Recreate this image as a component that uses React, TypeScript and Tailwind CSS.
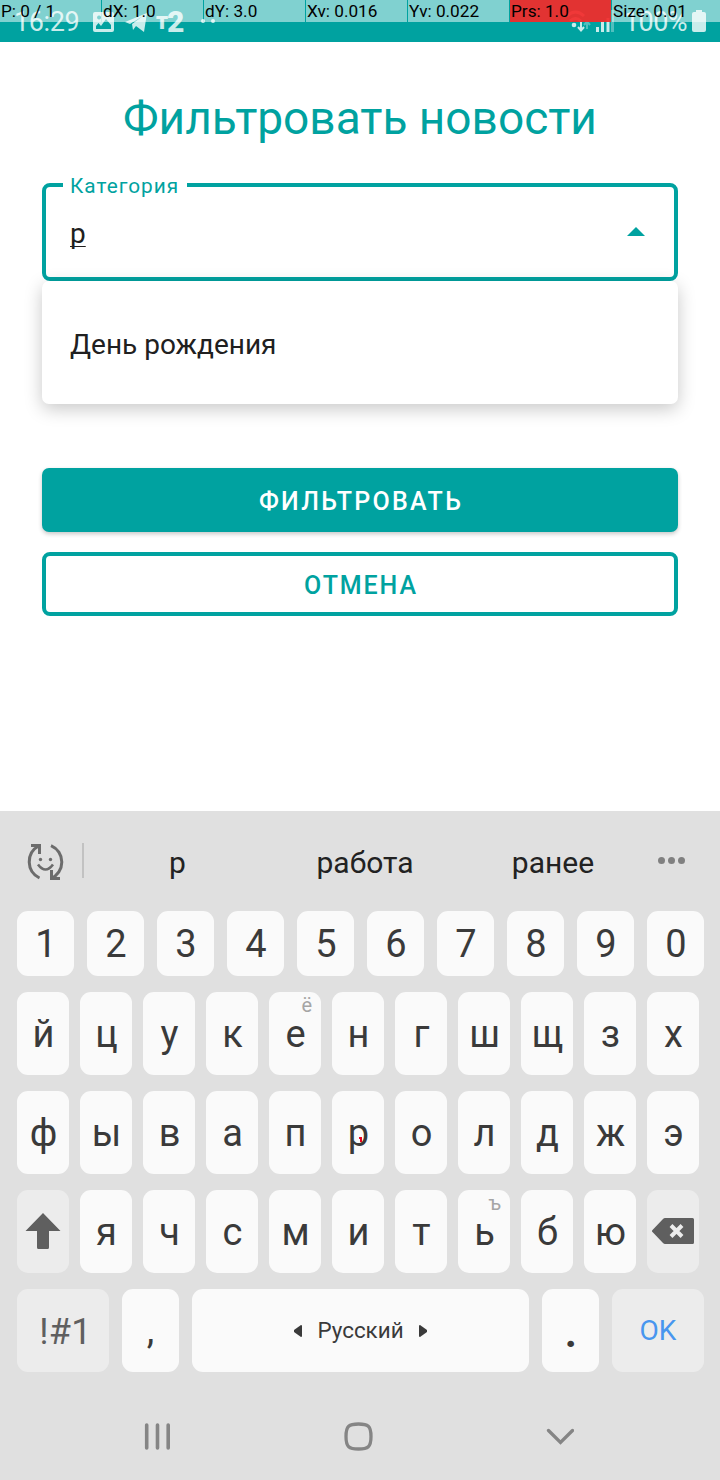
import React from "react";

const debugCells = [
  { text: "P: 0 / 1", cls: "bg-white/50" },
  { text: "dX: 1.0", cls: "bg-white/50" },
  { text: "dY: 3.0", cls: "bg-white/50" },
  { text: "Xv: 0.016", cls: "bg-white/50" },
  { text: "Yv: 0.022", cls: "bg-white/50" },
  { text: "Prs: 1.0", cls: "bg-[#f32a2a]/93" },
  { text: "Size: 0.01", cls: "bg-white/50" },
];

function StatusBar() {
  return (
    <header className="relative h-[42px] overflow-hidden bg-[#00a2a0] text-[#c9eceb]">
      <div className="flex h-full items-start pl-[14px] pt-[7px]">
        <span className="w-[78px] shrink-0 whitespace-nowrap text-[27px] leading-[31px] tracking-[-0.400px]">16:29</span>
        <svg className="mt-[5px] ml-px shrink-0" width="21" height="20" viewBox="0 0 21 20" fill="currentColor">
          <path fillRule="evenodd" d="M2 0h17a2 2 0 0 1 2 2v16a2 2 0 0 1-2 2H2a2 2 0 0 1-2-2V2a2 2 0 0 1 2-2Zm4 3.500a2 2 0 1 0 .1 0ZM3 17h15v-4l-5-6-5 7-2.500-3L3 14Z" />
        </svg>
        <svg className="mt-[6px] ml-[11px] shrink-0" width="22" height="19" viewBox="0 0 22 19" fill="currentColor">
          <path d="M0 9 22 0l-3 19-8-6-3 4-1-6L18 3 5 11Z" />
        </svg>
        <span className="ml-[9px] mt-[3px] w-[11px] text-[23px] leading-[24px] font-black">т</span>
        <span className="mt-px w-[17px] text-[30px] leading-[27px] font-black">2</span>
        <span className="ml-[17px] mt-[12px] flex gap-[6px]">
          <i className="size-1 rounded-full bg-current" />
          <i className="size-1 rounded-full bg-current" />
        </span>
        <svg className="ml-auto mt-[1px] shrink-0" width="46" height="26" viewBox="0 0 46 26" fill="none" stroke="currentColor">
          <path d="M3 8q8.500-8 17 0M6 13q5.500-5 11 0" strokeWidth="3" />
          <circle cx="10" cy="17" r="2.300" fill="currentColor" stroke="none" />
          <path d="M17 14v8m-3-3 3 3.500 3-3.500" strokeWidth="2" />
          <path d="M23 21v-7m-3 3 3-3.500 3 3.500" strokeWidth="2" opacity=".4" />
          <path d="M33.500 19v5M38.500 13.500V24M44 10v14" strokeWidth="3" />
        </svg>
        <i className="mt-[3px] ml-px h-[22px] w-[3px] shrink-0 bg-current opacity-40" />
        <span className="ml-[10px] w-[63px] shrink-0 whitespace-nowrap text-[27px] leading-[31px] tracking-[-0.600px]">100%</span>
        <svg className="ml-[5px] mr-[14px] mt-[3px] shrink-0" width="14" height="22" viewBox="0 0 14 22" fill="currentColor">
          <path d="M4 0h6v2h2a2 2 0 0 1 2 2v16a2 2 0 0 1-2 2H2a2 2 0 0 1-2-2V4a2 2 0 0 1 2-2h2Z" />
        </svg>
      </div>
      <div className="absolute inset-x-0 top-0 flex h-[22px] gap-px text-black">
        {debugCells.map((c) => (
          <span key={c.text} className={`w-[101px] shrink-0 whitespace-nowrap pl-px text-[17.200px] leading-[22px] last:w-[110px] ${c.cls}`}>
            {c.text}
          </span>
        ))}
      </div>
    </header>
  );
}

function Form() {
  return (
    <main className="flex h-[769px] flex-col px-[42px] text-[#00a2a0]">
      <h1 className="mt-[48px] text-center text-[46px] leading-[56px] whitespace-nowrap">Фильтровать новости</h1>
      <fieldset className="mt-[25px] h-[110px] rounded-[8px] border-4 border-[#00a2a0] pl-[17px] pr-[29px]">
        <legend className="h-[28px] w-[124px] pl-[7px] text-[20.800px] leading-[30px] tracking-[1px] whitespace-nowrap">Категория</legend>
        <div className="mt-[15px] flex items-center justify-between pl-[7px]">
          <span className="text-[28px] leading-[40px] text-[#202020] underline decoration-1 underline-offset-[3px] [text-decoration-skip-ink:none]">р</span>
          <svg className="-mt-[6px]" width="18" height="9" viewBox="0 0 18 9" fill="currentColor">
            <path d="M0 9 9 0l9 9Z" />
          </svg>
        </div>
      </fieldset>
      <div className="flex h-[123px] shrink-0 items-center rounded-[7px] bg-white pl-[28px] pt-[4px] text-[28px] text-[#202020] shadow-[0_5px_18px_rgba(0,0,0,0.22)]">
        День рождения
      </div>
      <button className="mt-[64px] h-[64px] shrink-0 rounded-[7px] bg-[#00a2a0] pl-[2px] pt-[4px] text-[25px] font-medium tracking-[2.300px] text-white shadow-[0_2px_4px_rgba(0,0,0,0.22)]">
        ФИЛЬТРОВАТЬ
      </button>
      <button className="mt-[20px] h-[64px] shrink-0 rounded-[8px] border-4 border-[#00a2a0] pl-[2px] pt-[4px] text-[25px] font-medium tracking-[1.900px]">
        ОТМЕНА
      </button>
    </main>
  );
}

function Letter({ ch }: { ch: string }) {
  const hint = ch === "е" ? "ё" : ch === "ь" ? "ъ" : null;
  return (
    <div className="relative flex w-[52px] items-center justify-center rounded-[11px] bg-[#fafafa] pl-px pt-[2px] text-[38px] text-[#3a3a3a]">
      {ch}
      {hint && <span className="absolute right-[9px] top-[2px] text-[20px] leading-[22px] text-[#a5a5a5]">{hint}</span>}
      {ch === "р" && (
        <svg className="absolute left-[27px] top-[46px]" width="4" height="6" viewBox="0 0 4 6">
          <path d="M0 0h3v5H1V2H0Z" fill="#e80020" />
        </svg>
      )}
    </div>
  );
}

function Keyboard() {
  return (
    <section className="flex h-[669px] flex-col bg-[#e0e0e0] pl-[17px] text-[#3a3a3a]">
      <div className="flex h-[100px] items-center text-[30px] text-[#222222]">
        <svg className="-mt-px ml-[9px]" width="39" height="40" viewBox="0 0 39 40" fill="none" stroke="#6c6c6c" strokeWidth="3">
          <path d="M13.500 37A18 18 0 0 1 12.500 5M5 4.500h8.500V13M25 4.500a18 18 0 0 1 0 33M34 37.500h-8.500V29" />
          <path d="M12 23.500q7.500 10 15 0" strokeWidth="2.600" />
          <circle cx="14.500" cy="18.500" r="1.700" fill="#6c6c6c" stroke="none" />
          <circle cx="24.500" cy="18.500" r="1.700" fill="#6c6c6c" stroke="none" />
        </svg>
        <i className="-mt-px ml-[17px] h-[35px] w-[2px] bg-[#c2c2c2]" />
        <div className="flex w-[563px] pt-[2px]">
          <span className="w-[187px] text-center">р</span>
          <span className="w-[188px] text-center">работа</span>
          <span className="w-[188px] text-center">ранее</span>
        </div>
        <span className="-mt-[2px] ml-[11px] flex gap-[3px]">
          <i className="size-[7px] rounded-full bg-[#808080]" />
          <i className="size-[7px] rounded-full bg-[#808080]" />
          <i className="size-[7px] rounded-full bg-[#808080]" />
        </span>
      </div>
      <div className="flex h-[65px] gap-[13px]">
        {"1234567890".split("").map((n) => (
          <div key={n} className="flex w-[57px] items-center justify-center rounded-[11px] bg-[#fafafa] pl-px pt-[2px] text-[38px]">{n}</div>
        ))}
      </div>
      <div className="mt-[16px] flex h-[83px] gap-[11px]">
        {"йцукенгшщзх".split("").map((c) => <Letter key={c} ch={c} />)}
      </div>
      <div className="mt-[16px] flex h-[83px] gap-[11px]">
        {"фывапролджэ".split("").map((c) => <Letter key={c} ch={c} />)}
      </div>
      <div className="mt-[16px] flex h-[83px] gap-[11px]">
        <div className="flex w-[52px] items-center justify-center rounded-[11px] bg-[#ececec] pb-px">
          <svg width="36" height="36" viewBox="0 0 36 36" fill="#5f5f5f">
            <path d="M18 0 35.500 18H24v16.500a1.500 1.500 0 0 1-1.500 1.500h-9a1.500 1.500 0 0 1-1.500-1.500V18H.5Z" />
          </svg>
        </div>
        {"ячсмитьбю".split("").map((c) => <Letter key={c} ch={c} />)}
        <div className="flex w-[52px] items-center justify-center rounded-[11px] bg-[#ececec] pb-[2px]">
          <svg width="42" height="26" viewBox="0 0 42 26">
            <path d="M13 0h27.500A1.500 1.500 0 0 1 42 1.500v23a1.500 1.500 0 0 1-1.500 1.500H13q-1 0-2-1L.5 14a1.400 1.400 0 0 1 0-2L11 1q1-1 2-1Z" fill="#5f5f5f" />
            <path d="m19 7.500 11 11m0-11-11 11" stroke="#ececec" strokeWidth="4" />
          </svg>
        </div>
      </div>
      <div className="mt-[16px] flex h-[83px] gap-[13px]">
        <div className="flex w-[92px] items-center justify-center rounded-[11px] bg-[#ececec] pl-[5px] pt-[2px] text-[36px] tracking-[0.300px] text-[#5f5f5f]">!#1</div>
        <div className="flex w-[57px] items-center justify-center rounded-[11px] bg-[#fafafa] text-[38px]">,</div>
        <div className="flex w-[337px] items-center justify-center gap-[15px] rounded-[11px] bg-[#fafafa] text-[22.400px]">
          <svg width="8" height="12" viewBox="0 0 8 12" fill="currentColor"><path d="M8 1v10q0 1-1 1L0 7V5l7-5q1 0 1 1Z" /></svg>
          <span className="pt-px">Русский</span>
          <svg width="8" height="12" viewBox="0 0 8 12" fill="currentColor"><path d="M0 1v10q0 1 1 1l7-5V5L1 0Q0 0 0 1Z" /></svg>
        </div>
        <div className="flex w-[57px] items-center justify-center rounded-[11px] bg-[#fafafa] pl-px text-[48px] font-medium">.</div>
        <div className="flex w-[92px] items-center justify-center rounded-[11px] bg-[#ececec] pt-px text-[28px] text-[#4896ef]">OK</div>
      </div>
      <nav className="mt-[50px] flex h-[29px] items-center text-[#858585]">
        <svg className="ml-[127px]" width="27" height="27" viewBox="0 0 27 27" stroke="currentColor" strokeWidth="3.600" strokeLinecap="round">
          <path d="M2.700 2v23M13.500 2v23M24.200 2v23" />
        </svg>
        <svg className="ml-[173px]" width="29" height="29" viewBox="0 0 29 29" fill="none" stroke="currentColor" strokeWidth="3.300">
          <path d="M14.500 2C24 2 27 4 27 14.500S24 27 14.500 27 2 25 2 14.500 5 2 14.500 2Z" />
        </svg>
        <svg className="ml-[173px]" width="28" height="17" viewBox="0 0 28 17" fill="none" stroke="currentColor" strokeWidth="3.300" strokeLinecap="round">
          <path d="m2.500 2.500 12 12 12-12" />
        </svg>
      </nav>
    </section>
  );
}

export default function App() {
  return (
    <div className="h-[1480px] w-[720px] overflow-hidden bg-white font-[Roboto,sans-serif]">
      <StatusBar />
      <Form />
      <Keyboard />
    </div>
  );
}
